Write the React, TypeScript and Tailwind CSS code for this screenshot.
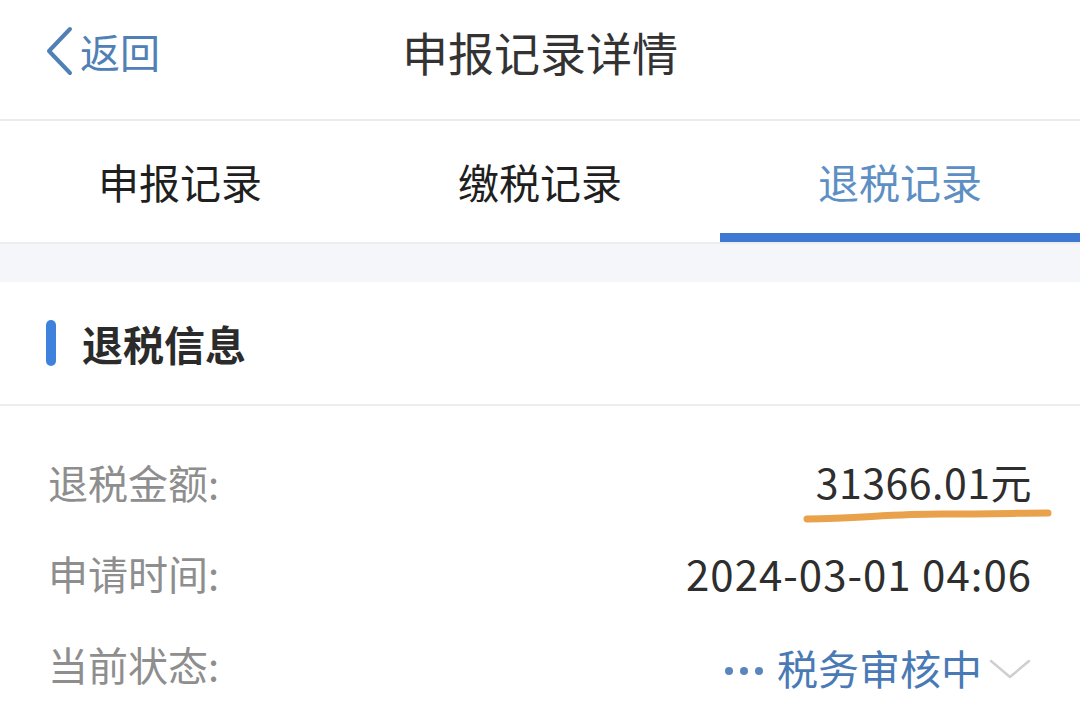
import React from 'react';

const tabs = ['申报记录', '缴税记录', '退税记录'];
const activeTab = 2;

function Row({ label, children }: { label: string; children: React.ReactNode }) {
  return (
    <div className="flex h-[91px] items-center justify-between pl-[48px] pr-[48px]">
      <span className="text-[40px] text-[#8e8e8e]">{label}</span>
      <div className="flex items-center">{children}</div>
    </div>
  );
}

export default function App() {
  return (
    <div
      className="h-[714px] w-[1080px] overflow-hidden bg-white"
      style={{ fontFamily: '"Noto Sans CJK SC", "Noto Sans", sans-serif' }}
    >
      {/* Header */}
      <div className="grid h-[121px] grid-cols-[1fr_auto_1fr] items-center border-b-2 border-[#ececec] pb-[18px]">
        <button className="flex items-center pl-[44px] text-[#4f80b6]">
          <svg width="30" height="50" viewBox="0 0 30 50" fill="none">
            <path d="M26 3 L5 25 L26 47" stroke="currentColor" strokeWidth="4" strokeLinecap="round" strokeLinejoin="round" />
          </svg>
          <span className="ml-[6px] text-[40px] leading-none">返回</span>
        </button>
        <h1 className="text-[46px] leading-none text-[#333333]">申报记录详情</h1>
        <div />
      </div>

      {/* Tabs */}
      <div className="grid h-[121px] grid-cols-3">
        {tabs.map((t, i) => (
          <div
            key={t}
            className={
              i === activeTab
                ? 'flex items-center justify-center border-b-[9px] border-[#3d79d2] pt-[9px] text-[41px] text-[#5d8fc4]'
                : 'flex items-center justify-center text-[41px] text-[#1f1f1f]'
            }
          >
            {t}
          </div>
        ))}
      </div>

      {/* Gray gap */}
      <div className="h-[40px] border-t-2 border-[#ebedf1] bg-[#f5f6fa]" />

      {/* Card */}
      <div className="bg-white">
        <div className="flex h-[124px] items-center border-b-2 border-[#ededed] pl-[46px]">
          <div className="h-[46px] w-[10px] rounded-full bg-[#3f82de]" />
          <span className="ml-[26px] text-[41px] font-bold leading-none text-[#2b2b2b]">退税信息</span>
        </div>

        <div className="pt-[30px]">
          <Row label="退税金额:">
            <div className="relative">
              <span className="text-[41px] tracking-[0.5px] text-[#2e2e2e]">31366.01元</span>
              <svg className="absolute left-[-14px] top-[57px]" width="252" height="16" viewBox="0 0 252 16" fill="none">
                <path d="M5 11 C 60 10, 90 6, 140 6 S 220 5, 246 5" stroke="#e9a24b" strokeWidth="7" strokeLinecap="round" />
              </svg>
            </div>
          </Row>
          <Row label="申请时间:">
            <span className="text-[42px] tracking-[1px] text-[#2e2e2e]">2024-03-01 04:06</span>
          </Row>
          <Row label="当前状态:">
            <span className="mr-[14px] mt-[14px] flex items-center gap-[7px]">
              <span className="h-[8px] w-[8px] rounded-full bg-[#5a86bf]" />
              <span className="h-[8px] w-[8px] rounded-full bg-[#5a86bf]" />
              <span className="h-[8px] w-[8px] rounded-full bg-[#5a86bf]" />
            </span>
            <span className="mt-[8px] text-[41px] text-[#4a7ab5]">税务审核中</span>
            <svg className="ml-[6px] mt-[10px]" width="44" height="24" viewBox="0 0 44 24" fill="none">
              <path d="M3 4 L22 20 L41 4" stroke="#cfcfcf" strokeWidth="2.5" strokeLinecap="round" strokeLinejoin="round" />
            </svg>
          </Row>
        </div>
      </div>
    </div>
  );
}
